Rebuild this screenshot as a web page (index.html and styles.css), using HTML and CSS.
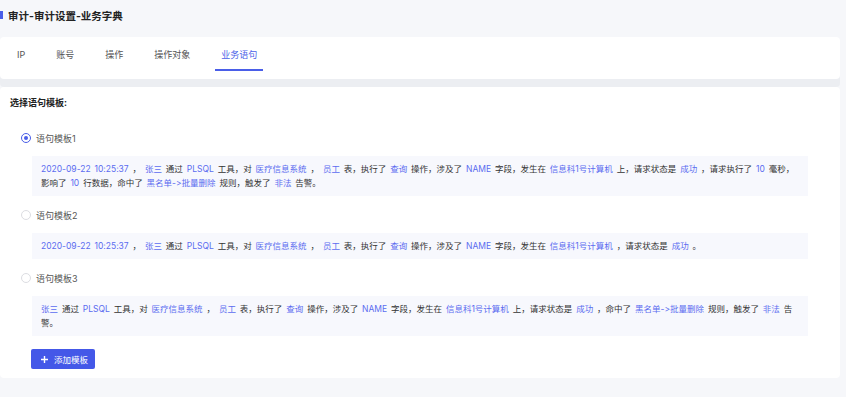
FILE: index.html
```html
<!DOCTYPE html>
<html lang="zh-CN">
<head>
  <meta charset="UTF-8">
  <meta name="viewport" content="width=device-width, initial-scale=1.0">
  <title>业务字典</title>
  <link rel="stylesheet" href="styles.css">
</head>
<body>
  <div class="page">
    <div class="crumb"><span class="mark"></span>审计-审计设置-业务字典</div>

    <div class="card tabs">
      <div class="tab">IP</div>
      <div class="tab">账号</div>
      <div class="tab">操作</div>
      <div class="tab">操作对象</div>
      <div class="tab active">业务语句</div>
    </div>

    <div class="card panel">
      <div class="panel-title">选择语句模板:</div>

      <div class="option">
        <span class="radio checked"></span>
        <span class="label">语句模板1</span>
      </div>
      <div class="sample">
        <span class="v">2020-09-22 10:25:37</span> ， <span class="v">张三</span> 通过 <span class="v">PLSQL</span> 工具，对 <span class="v">医疗信息系统</span> ， <span class="v">员工</span> 表，执行了 <span class="v">查询</span> 操作，涉及了 <span class="v">NAME</span> 字段，发生在 <span class="v">信息科1号计算机</span> 上，请求状态是 <span class="v">成功</span> ，请求执行了 <span class="v">10</span> 毫秒，影响了 <span class="v">10</span> 行数据，命中了 <span class="v">黑名单-&gt;批量删除</span> 规则，触发了 <span class="v">非法</span> 告警。
      </div>

      <div class="option">
        <span class="radio"></span>
        <span class="label">语句模板2</span>
      </div>
      <div class="sample">
        <span class="v">2020-09-22 10:25:37</span> ， <span class="v">张三</span> 通过 <span class="v">PLSQL</span> 工具，对 <span class="v">医疗信息系统</span> ， <span class="v">员工</span> 表，执行了 <span class="v">查询</span> 操作，涉及了 <span class="v">NAME</span> 字段，发生在 <span class="v">信息科1号计算机</span> ，请求状态是 <span class="v">成功</span> 。
      </div>

      <div class="option">
        <span class="radio"></span>
        <span class="label">语句模板3</span>
      </div>
      <div class="sample">
        <span class="v">张三</span> 通过 <span class="v">PLSQL</span> 工具，对 <span class="v">医疗信息系统</span> ， <span class="v">员工</span> 表，执行了 <span class="v">查询</span> 操作，涉及了 <span class="v">NAME</span> 字段，发生在 <span class="v">信息科1号计算机</span> 上，请求状态是 <span class="v">成功</span> ，命中了 <span class="v">黑名单-&gt;批量删除</span> 规则，触发了 <span class="v">非法</span> 告警。
      </div>

      <button class="add-btn">
        <svg width="7" height="7" viewBox="0 0 7 7"><path d="M3.5 0v7M0 3.5h7" stroke="#fff" stroke-width="1.4"/></svg>
        添加模板
      </button>
    </div>
  </div>
</body>
</html>
```

FILE: styles.css
```css
html, body {
  margin: 0;
  padding: 0;
  background: #f6f7fa;
  font-family: Inter, "Noto Sans CJK SC", sans-serif;
  font-feature-settings: "calt" 0, "liga" 0;
  color: #333;
}
.page {
  padding: 0 6px 0 0;
}
.crumb {
  display: flex;
  align-items: center;
  height: 14px;
  padding-top: 8px;
  margin-bottom: 15px;
  font-size: 10.5px;
  font-weight: bold;
  color: #222;
}
.mark {
  width: 3px;
  height: 8px;
  background: #4a5ee8;
  margin-right: 5px;
}
.card {
  background: #fff;
  border-radius: 4px;
}
.tabs {
  display: flex;
  gap: 19px;
  padding: 0 0 8px 11px;
  margin-bottom: 8px;
  box-shadow: 0 8px 0 #eceef2;
}
.tab {
  font-size: 9px;
  line-height: 12px;
  color: #555;
  padding: 12px 6px 8px;
  border-bottom: 2px solid transparent;
}
.tab.active {
  color: #4a5ee8;
  border-bottom-color: #4a5ee8;
}
.panel {
  padding: 10px 10px 9px;
}
.panel-title {
  font-size: 9px;
  line-height: 12px;
  font-weight: bold;
  color: #222;
  margin-bottom: 23px;
}
.option {
  display: flex;
  align-items: center;
  height: 12px;
  padding-left: 11px;
  margin-bottom: 12px;
}
.radio {
  width: 10px;
  height: 10px;
  box-sizing: border-box;
  border: 1px solid #dcdde2;
  border-radius: 50%;
  margin-right: 5px;
  display: flex;
  align-items: center;
  justify-content: center;
}
.radio.checked {
  border-color: #4a5ee8;
}
.radio.checked::after {
  content: "";
  width: 4px;
  height: 4px;
  border-radius: 50%;
  background: #4a5ee8;
}
.label {
  font-size: 9px;
  color: #555;
}
.sample {
  margin: 0 22px 13px 22px;
  padding: 6px 8px 6px 9px;
  background: #f7f8fd;
  font-size: 8.5px;
  line-height: 14px;
  word-spacing: 1.5px;
  color: #333;
}
.v {
  color: #5b6cf0;
}
.add-btn {
  display: flex;
  align-items: center;
  gap: 6px;
  margin-left: 21px;
  width: 64px;
  height: 20px;
  padding: 0 0 0 10px;
  border: none;
  border-radius: 2px;
  background: #4458e8;
  color: #fff;
  font-family: inherit;
  font-size: 8.5px;
}
```
